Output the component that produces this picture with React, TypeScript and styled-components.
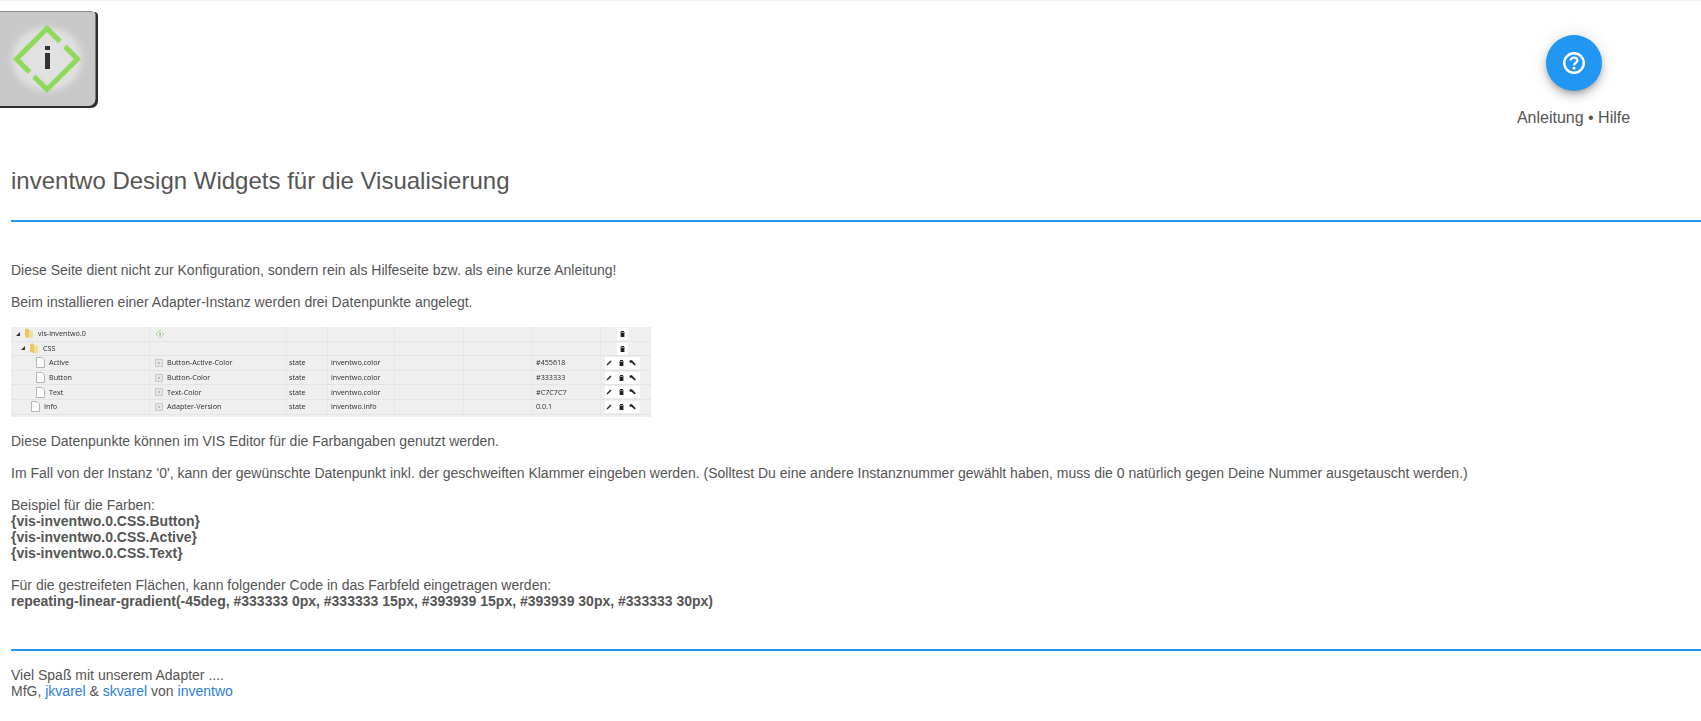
import React from "react";
import styled, { createGlobalStyle } from "styled-components";

const Global = createGlobalStyle`
  html, body { margin: 0; padding: 0; background: #fff; }
  body { font-family: "Liberation Sans", Arial, sans-serif; color: #555; font-size: 14px; line-height: 16px; }
`;

const Page = styled.div`
  border-top: 1px solid #f3f3f3;
  height: 720px;
  overflow: hidden;
`;
const Header = styled.header`
  display: flex;
  justify-content: space-between;
  align-items: flex-start;
  height: 135px;
`;
const LogoBox = styled.div`
  margin-top: 9px;
  width: 98px;
  height: 100px;
`;
const HelpBlock = styled.div`
  margin-top: 34px;
  margin-right: 71px;
  width: 113px;
  display: flex;
  flex-direction: column;
  align-items: center;
`;
const HelpButton = styled.button`
  width: 56px;
  height: 56px;
  border: 0;
  padding: 0;
  border-radius: 50%;
  background: #2196f3;
  box-shadow: 0 3px 5px -1px rgba(0,0,0,.2), 0 6px 10px 0 rgba(0,0,0,.14), 0 1px 18px 0 rgba(0,0,0,.12);
  display: flex;
  align-items: center;
  justify-content: center;
`;
const HelpLabel = styled.div`
  margin-top: 18px;
  font-size: 16px;
  line-height: 18px;
  white-space: nowrap;
`;
const Content = styled.main`
  padding-left: 11px;
`;
const Title = styled.h1`
  margin: 0;
  font-size: 24px;
  line-height: 28px;
  font-weight: 400;
  padding-top: 31px;
  height: 84px;
  box-sizing: border-box;
`;
const Rule = styled.hr`
  margin: 0;
  border: 0;
  height: 2px;
  background: #2196f3;
`;
const Body = styled.div`
  padding-top: 40px;
`;
const Para = styled.p<{ $after?: number }>`
  margin: 0 0 ${(p) => p.$after ?? 16}px;
`;
const Shot = styled.div`
  width: 640px;
  height: 90px;
  margin-bottom: 16px;
  background: #efefef;
  overflow: hidden;
  font-family: "Open Sans", "Noto Sans", sans-serif;
  font-size: 7.2px;
  color: #2b2b2b;
`;
const ShotInner = styled.div`
  filter: blur(0.4px);
`;
const ShotRow = styled.div`
  display: grid;
  grid-template-columns: 139px 137px 41px 67px 69px 68px 69px 50px;
  height: 14.6px;
  border-bottom: 1px solid #e4e4e4;
  box-sizing: border-box;
`;
const Cell = styled.div<{ $indent?: number }>`
  display: flex;
  align-items: center;
  gap: 4px;
  padding-left: ${(p) => p.$indent ?? 2}px;
  border-right: 1px solid #e8e8e8;
  white-space: nowrap;
  line-height: 13px;
`;
const Actions = styled.div<{ $solo?: boolean }>`
  display: flex;
  align-items: center;
  justify-content: ${(p) => (p.$solo ? "center" : "flex-start")};
  padding-left: ${(p) => (p.$solo ? 0 : 1)}px;
  width: ${(p) => (p.$solo ? 11 : 35)}px;
  margin-left: ${(p) => (p.$solo ? 16 : 4)}px;
  height: 12px;
  margin-top: 1px;
  background: #fff;
  box-sizing: border-box;
`;
const ActionGap = styled.span<{ $w: number }>`
  width: ${(p) => p.$w}px;
`;
const Closing = styled.div`
  padding-top: 40px;
`;
const Footer = styled.div`
  padding-top: 16px;
`;
const Link = styled.a`
  color: #2b7de0;
  text-decoration: none;
`;

const Logo = () => (
  <svg width="98" height="100" viewBox="0 0 98 100">
    <defs>
      <radialGradient id="glow" cx="0.5" cy="0.5" r="0.5">
        <stop offset="0" stopColor="#e4e4e4" />
        <stop offset="0.72" stopColor="#dedede" />
        <stop offset="1" stopColor="#c8c8c8" stopOpacity="0" />
      </radialGradient>
      <filter id="soft"><feGaussianBlur stdDeviation="0.5" /></filter>
    </defs>
    <path d="M0 2 H94 a4 4 0 0 1 4 4 V91 a7 7 0 0 1 -7 7 H0 Z" fill="#2e2e2e" />
    <path d="M0 1 H92 a4 4 0 0 1 3.5 3 V89 a7 7 0 0 1 -7 7 H0 Z" fill="#c8c8c8" />
    <path d="M0 1.5 H92" stroke="#8a8a8a" strokeWidth="1" fill="none" />
    <rect x="3" y="9" width="88" height="80" fill="url(#glow)" />
    <g filter="url(#soft)">
      <polyline points="60,31.5 47,18.5 16.5,49 29.5,62" fill="none" stroke="#8fd95a" strokeWidth="5" />
      <polyline points="65,36.5 77.5,49 47,79.5 34,66.5" fill="none" stroke="#8fd95a" strokeWidth="5" />
      <rect x="45" y="36" width="5" height="4" fill="#333" />
      <rect x="45" y="43" width="5" height="16" fill="#333" />
    </g>
  </svg>
);

const HelpIcon = () => (
  <svg width="24" height="24" viewBox="0 0 24 24" fill="none" stroke="#fff">
    <circle cx="12" cy="12" r="9.8" strokeWidth="2.4" />
    <path d="M8.7 9.6 C8.7 7.7 10.2 6.6 12 6.6 C13.9 6.6 15.3 7.8 15.3 9.5 C15.3 11.8 12 11.9 12 14.6" strokeWidth="2.3" />
    <rect x="10.7" y="16" width="2.6" height="2.4" fill="#fff" stroke="none" />
  </svg>
);

const Folder = () => (
  <svg width="10" height="11" viewBox="0 0 10 11">
    <path d="M1 1 L4 0.5 L5 2 L5 10 L1 9 Z" fill="#e8c766" />
    <path d="M5 2 L9 3 L9 10 L5 10 Z" fill="#f3dc96" />
  </svg>
);
const Arrow = () => (
  <svg width="4" height="4" viewBox="0 0 4 4"><path d="M0 4 L4 4 L4 0 Z" fill="#333" /></svg>
);
const FileIcon = () => (
  <svg width="9" height="11" viewBox="0 0 9 11">
    <path d="M.5 .5 H6 L8.5 3 V10.5 H.5 Z" fill="#fff" stroke="#b5b5b5" />
  </svg>
);
const StateIcon = () => (
  <svg width="8" height="8" viewBox="0 0 8 8">
    <rect x=".5" y=".5" width="7" height="7" fill="#e6e6e6" stroke="#c4cccc" />
    <rect x="3" y="3" width="2" height="2" fill="#b5bfbf" />
  </svg>
);
const Diamond = () => (
  <svg width="10" height="10" viewBox="0 0 10 10">
    <path d="M6 2 L5 1 L1 5 L3.4 7.4 M6.8 3 L9 5 L5 9 L4 8" fill="none" stroke="#8fd95a" strokeWidth=".8" />
    <rect x="4.7" y="3.5" width=".7" height="3" fill="#555" />
  </svg>
);
const Pencil = () => (
  <svg width="6" height="6" viewBox="0 0 6 6"><path d="M0.5 5.5 L1 4 L4.5 .5 L5.5 1.5 L2 5 Z" fill="#222" /></svg>
);
const Trash = () => (
  <svg width="5" height="6" viewBox="0 0 5 6"><path d="M1 0 H4 V1 H5 V1.6 H0 V1 H1 Z M.6 2 H4.4 V6 H.6 Z" fill="#222" /></svg>
);
const Wrench = () => (
  <svg width="7" height="6" viewBox="0 0 7 6"><path d="M.3 1.6 L1 .2 L3 .2 L3.8 1.2 L6.8 4.2 L5.7 5.5 L2.6 2.7 L1.2 2.7 Z" fill="#222" /></svg>
);

type Row = {
  name: string;
  indent: number;
  kind: "root" | "folder" | "file";
  desc?: string;
  type?: string;
  role?: string;
  value?: string;
};

const rows: Row[] = [
  { name: "vis-inventwo.0", indent: 5, kind: "root" },
  { name: "CSS", indent: 10, kind: "folder" },
  { name: "Active", indent: 25, kind: "file", desc: "Button-Active-Color", type: "state", role: "inventwo.color", value: "#455618" },
  { name: "Button", indent: 25, kind: "file", desc: "Button-Color", type: "state", role: "inventwo.color", value: "#333333" },
  { name: "Text", indent: 25, kind: "file", desc: "Text-Color", type: "state", role: "inventwo.color", value: "#C7C7C7" },
  { name: "Info", indent: 20, kind: "file", desc: "Adapter-Version", type: "state", role: "inventwo.info", value: "0.0.1" },
];

const ObjectsShot = () => (
  <Shot role="img" aria-label="Datenpunkte">
    <ShotInner>
      {rows.map((r) => (
        <ShotRow key={r.name}>
          <Cell $indent={r.indent}>
            {r.kind !== "file" && <Arrow />}
            {r.kind === "file" ? <FileIcon /> : <Folder />}
            {r.name}
          </Cell>
          <Cell $indent={5}>
            {r.kind === "root" && <Diamond />}
            {r.kind === "file" && <StateIcon />}
            {r.desc}
          </Cell>
          <Cell>{r.type}</Cell>
          <Cell $indent={3}>{r.role}</Cell>
          <Cell />
          <Cell />
          <Cell $indent={4}>{r.value}</Cell>
          <Actions $solo={r.kind !== "file"}>
            {r.kind === "file" ? (
              <>
                <Pencil />
                <ActionGap $w={7} />
                <Trash />
                <ActionGap $w={5} />
                <Wrench />
              </>
            ) : (
              <Trash />
            )}
          </Actions>
        </ShotRow>
      ))}
    </ShotInner>
  </Shot>
);

export default function App() {
  return (
    <Page>
      <Global />
      <Header>
        <LogoBox><Logo /></LogoBox>
        <HelpBlock>
          <HelpButton aria-label="Hilfe"><HelpIcon /></HelpButton>
          <HelpLabel>Anleitung • Hilfe</HelpLabel>
        </HelpBlock>
      </Header>
      <Content>
        <Title>inventwo Design Widgets für die Visualisierung</Title>
        <Rule />
        <Body>
          <Para>Diese Seite dient nicht zur Konfiguration, sondern rein als Hilfeseite bzw. als eine kurze Anleitung!</Para>
          <Para $after={17}>Beim installieren einer Adapter-Instanz werden drei Datenpunkte angelegt.</Para>
          <ObjectsShot />
          <Para>Diese Datenpunkte können im VIS Editor für die Farbangaben genutzt werden.</Para>
          <Para>Im Fall von der Instanz '0', kann der gewünschte Datenpunkt inkl. der geschweiften Klammer eingeben werden. (Solltest Du eine andere Instanznummer gewählt haben, muss die 0 natürlich gegen Deine Nummer ausgetauscht werden.)</Para>
          <Para>
            Beispiel für die Farben:<br />
            <b>{"{vis-inventwo.0.CSS.Button}"}</b><br />
            <b>{"{vis-inventwo.0.CSS.Active}"}</b><br />
            <b>{"{vis-inventwo.0.CSS.Text}"}</b>
          </Para>
          <Para $after={0}>
            Für die gestreifeten Flächen, kann folgender Code in das Farbfeld eingetragen werden:<br />
            <b>repeating-linear-gradient(-45deg, #333333 0px, #333333 15px, #393939 15px, #393939 30px, #333333 30px)</b>
          </Para>
        </Body>
        <Closing><Rule /></Closing>
        <Footer>
          Viel Spaß mit unserem Adapter ....<br />
          MfG, <Link href="#">jkvarel</Link> &amp; <Link href="#">skvarel</Link> von <Link href="#">inventwo</Link>
        </Footer>
      </Content>
    </Page>
  );
}
